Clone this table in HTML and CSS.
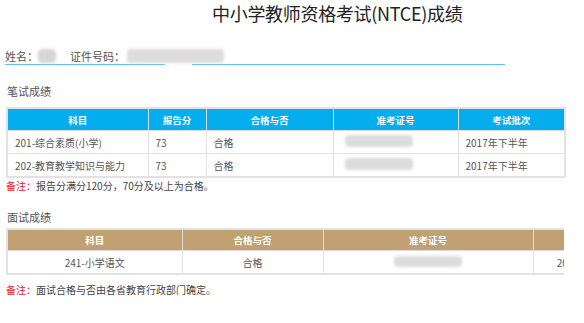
FILE: index.html
```html
<!DOCTYPE html>
<html lang="zh">
<head>
<meta charset="utf-8">
<link rel="stylesheet" href="styles.css">
</head>
<body>
<div class="page">
  <h1 class="title">中小学教师资格考试(NTCE)成绩</h1>
  <div class="info">
    <div class="info-seg seg1">
      <span class="label">姓名：</span><span class="blur blur-name"></span>
      <span class="label label2">证件号码：</span><span class="blur blur-id"></span>
    </div>
    <div class="info-seg seg2"></div>
  </div>

  <div class="section-title first">笔试成绩</div>
  <table class="score blue">
    <colgroup>
      <col style="width:141px"><col style="width:58px"><col style="width:127px"><col style="width:125px"><col style="width:107px">
    </colgroup>
    <thead>
      <tr><th>科目</th><th>报告分</th><th>合格与否</th><th>准考证号</th><th>考试批次</th></tr>
    </thead>
    <tbody>
      <tr><td>201-综合素质(小学)</td><td>73</td><td>合格</td><td><span class="blur blur-cell"></span></td><td>2017年下半年</td></tr>
      <tr><td>202-教育教学知识与能力</td><td>73</td><td>合格</td><td><span class="blur blur-cell"></span></td><td>2017年下半年</td></tr>
    </tbody>
  </table>
  <p class="note"><span class="red">备注：</span>报告分满分120分，70分及以上为合格。</p>

  <div class="section-title second">面试成绩</div>
  <div class="clip">
    <table class="score tan">
      <colgroup>
        <col style="width:175px"><col style="width:141px"><col style="width:210px"><col style="width:110px">
      </colgroup>
      <thead>
        <tr><th>科目</th><th>合格与否</th><th>准考证号</th><th>考试批次</th></tr>
      </thead>
      <tbody>
        <tr><td>241-小学语文</td><td>合格</td><td><span class="blur blur-cell2"></span></td><td>2017年下半年</td></tr>
      </tbody>
    </table>
  </div>
  <p class="note"><span class="red">备注：</span>面试合格与否由各省教育行政部门确定。</p>
</div>
</body>
</html>
```

FILE: styles.css
```css
html, body {
  margin: 0;
  padding: 0;
  background: #fff;
  overflow: hidden;
}
body {
  font-family: "Noto Sans CJK SC", "Noto Sans", sans-serif;
  color: #444;
}
.page {
  padding: 0 0 0 6px;
  width: 578px;
}
.title {
  margin: 2px 0 0 206px;
  font-size: 18px;
  font-weight: 400;
  line-height: 22px;
  color: #222;
  letter-spacing: -0.3px;
  white-space: nowrap;
}
.info {
  display: flex;
  margin-top: 23px;
  margin-left: -1px;
  height: 18px;
}
.info-seg {
  border-bottom: 1px solid #5cc4ee;
  height: 17px;
  display: flex;
  align-items: center;
  white-space: nowrap;
  flex-shrink: 0;
}
.info-seg > * { flex-shrink: 0; }
.seg1 { width: 160px; }
.seg2 { width: 313px; margin-left: 27px; }
.label {
  font-size: 11px;
  color: #555;
}
.label2 { margin-left: 14px; }
.blur {
  display: inline-block;
  background: #dadada;
  filter: blur(1.5px);
  border-radius: 4px;
}
.blur-name { width: 18px; height: 14px; margin-left: 0; background: #d6d6d6; }
.blur-id { width: 97px; height: 14px; margin-left: 2px; background: #dedcdc; }
.blur-cell { width: 68px; height: 12px; margin-left: 4px; background: #dcdcdc; }
.blur-cell2 { width: 68px; height: 11px; background: #dcdcdc; }

.section-title {
  font-size: 11px;
  color: #555;
  line-height: 14px;
}
.section-title.first { margin-top: 19px; margin-left: 1px; }
.section-title.second { margin-top: 18px; margin-left: 1px; }

.score {
  border-collapse: collapse;
  table-layout: fixed;
  font-size: 10px;
  border: 2px solid #e2e2e2;
}
.blue { margin-top: 9px; width: 558px; }
.score th {
  color: #fff;
  font-weight: 700;
  font-size: 9.5px;
  text-align: center;
  border: 1px solid #dcdcdc;
  padding: 0;
}
.blue th { background: #03adee; height: 21px; }
.score td {
  border: 1px solid #e2e2e2;
  height: 22px;
  padding: 0 0 0 7px;
  color: #555;
  white-space: nowrap;
  overflow: hidden;
}
.clip {
  width: 558px;
  overflow: hidden;
  margin-top: 4px;
}
.tan { width: 636px; }
.tan th { background: #c1a172; height: 20px; }
.tan td { text-align: center; padding: 0; height: 22px; }
.note {
  margin: 2px 0 0 0;
  font-size: 10px;
  line-height: 12px;
  color: #444;
}
.red { color: #e8202a; }
.clip + .note { margin-top: 9px; }
```
